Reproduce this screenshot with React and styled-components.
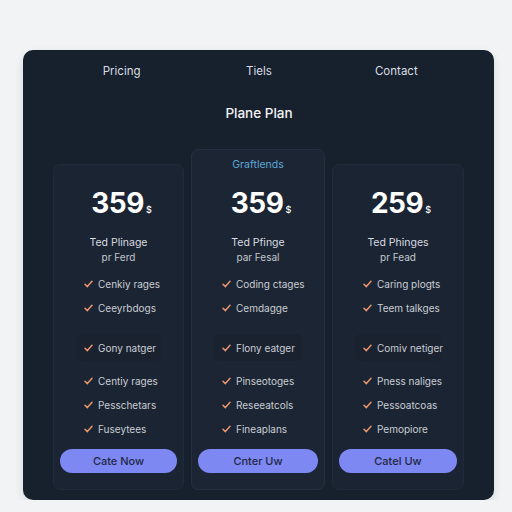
import React from "react";
import styled, { createGlobalStyle } from "styled-components";

const Global = createGlobalStyle`
  html, body { margin: 0; padding: 0; background: #f2f3f4; }
  body { font-family: Inter, "Noto Sans", "Liberation Sans", sans-serif; }
`;

const Panel = styled.section`
  margin: 50px 0 0 23px;
  width: 471px;
  height: 450px;
  box-sizing: border-box;
  padding: 13px 29px 10px 30px;
  background: #17202d;
  border-radius: 10px;
  box-shadow: 0 4px 10px rgba(20, 30, 45, 0.12);
  display: flex;
  flex-direction: column;
`;

const Nav = styled.nav`
  display: grid;
  grid-template-columns: repeat(3, 1fr);
  height: 16px;
  line-height: 16px;
`;

const NavItem = styled.span`
  text-align: center;
  font-size: 11.5px;
  color: #d9dde3;
`;

const Title = styled.h1`
  margin: 24px 0 0;
  text-align: center;
  font-size: 13.5px;
  line-height: 20px;
  font-weight: 500;
  color: #f1f3f6;
`;

const Cards = styled.div`
  margin-top: 26px;
  display: grid;
  grid-template-columns: 131px 134px 132px;
  column-gap: 7px;
  align-items: end;
`;

const Card = styled.div`
  box-sizing: border-box;
  height: ${(p) => (p.$featured ? 341 : 326)}px;
  padding: ${(p) => (p.$featured ? 8 : 22)}px 6px 16px;
  background: ${(p) => (p.$featured ? "#1c2533" : "#1b2433")};
  border: 1px solid ${(p) => (p.$featured ? "#243042" : "#1f2a3a")};
  border-radius: 7px;
  display: flex;
  flex-direction: column;
  align-items: center;
`;

const Badge = styled.div`
  height: 14px;
  line-height: 14px;
  margin-bottom: 15px;
  font-size: 10.5px;
  color: #5ea8d9;
`;

const Price = styled.div`
  height: 32px;
  line-height: 32px;
  font-size: 28px;
  font-weight: 700;
  color: #ffffff;
  letter-spacing: -0.5px;
  padding-left: 6px;
`;

const Currency = styled.span`
  font-size: 9px;
  font-weight: 500;
  margin-left: 2px;
  letter-spacing: 0;
`;

const Subtitle = styled.div`
  margin-top: 16px;
  text-align: center;
  line-height: 15px;
`;

const SubLine = styled.div`
  font-size: ${(p) => (p.$small ? 10 : 10.5)}px;
  color: ${(p) => (p.$small ? "#c2c7ce" : "#d8dbe0")};
`;

const List = styled.ul`
  list-style: none;
  margin: ${(p) => p.$top}px 0 0;
  padding: 0 0 0 16px;
  align-self: stretch;
  display: flex;
  flex-direction: column;
`;

const Item = styled.li`
  display: flex;
  align-items: center;
  gap: 5px;
  height: ${(p) => (p.$hl ? 27 : 24)}px;
  padding-left: 8px;
  margin-right: ${(p) => (p.$hl ? 16 : 0)}px;
  border-radius: 6px;
  background: ${(p) => (p.$hl ? "#1a2230" : "transparent")};
  font-size: 10px;
  color: #c9cdd3;
  white-space: nowrap;

  svg { flex-shrink: 0; }
`;

const Spacer = styled.div`
  height: ${(p) => p.$h}px;
`;

const Button = styled.button`
  margin-top: 8px;
  align-self: stretch;
  height: 26px;
  border: none;
  border-radius: 13px;
  background: #7d88f3;
  color: #1f2742;
  font-family: inherit;
  font-size: 11px;
  font-weight: 500;
`;

const Check = () => (
  <svg width="9" height="8" viewBox="0 0 9 8" fill="none">
    <path d="M1 4.2 L3.4 6.6 L8 1.2" stroke="#ea946c" strokeWidth="1.5" strokeLinecap="round" strokeLinejoin="round" />
  </svg>
);

const plans = [
  {
    price: "359",
    name: "Ted Plinage",
    per: "pr Ferd",
    top: ["Cenkiy rages", "Ceeyrbdogs"],
    hl: "Gony natger",
    bottom: ["Centiy rages", "Pesschetars", "Fuseytees"],
    cta: "Cate Now",
  },
  {
    badge: "Graftlends",
    price: "359",
    name: "Ted Pfinge",
    per: "par Fesal",
    top: ["Coding ctages", "Cemdagge"],
    hl: "Flony eatger",
    bottom: ["Pinseotoges", "Reseeatcols", "Fineaplans"],
    cta: "Cnter Uw",
  },
  {
    price: "259",
    name: "Ted Phinges",
    per: "pr Fead",
    top: ["Caring plogts", "Teem talkges"],
    hl: "Comiv netiger",
    bottom: ["Pness naliges", "Pessoatcoas", "Pemopiore"],
    cta: "Catel Uw",
  },
];

export default function App() {
  return (
    <>
      <Global />
      <Panel>
        <Nav>
          <NavItem>Pricing</NavItem>
          <NavItem>Tiels</NavItem>
          <NavItem>Contact</NavItem>
        </Nav>
        <Title>Plane Plan</Title>
        <Cards>
          {plans.map((p, i) => (
            <Card key={i} $featured={!!p.badge}>
              {p.badge && <Badge>{p.badge}</Badge>}
              <Price>
                {p.price}
                <Currency>$</Currency>
              </Price>
              <Subtitle>
                <SubLine>{p.name}</SubLine>
                <SubLine $small>{p.per}</SubLine>
              </Subtitle>
              <List $top={7}>
                {p.top.map((t) => (
                  <Item key={t}>
                    <Check />
                    {t}
                  </Item>
                ))}
                <Spacer $h={14} />
                <Item $hl>
                  <Check />
                  {p.hl}
                </Item>
                <Spacer $h={8} />
                {p.bottom.map((t) => (
                  <Item key={t}>
                    <Check />
                    {t}
                  </Item>
                ))}
              </List>
              <Button>{p.cta}</Button>
            </Card>
          ))}
        </Cards>
      </Panel>
    </>
  );
}
